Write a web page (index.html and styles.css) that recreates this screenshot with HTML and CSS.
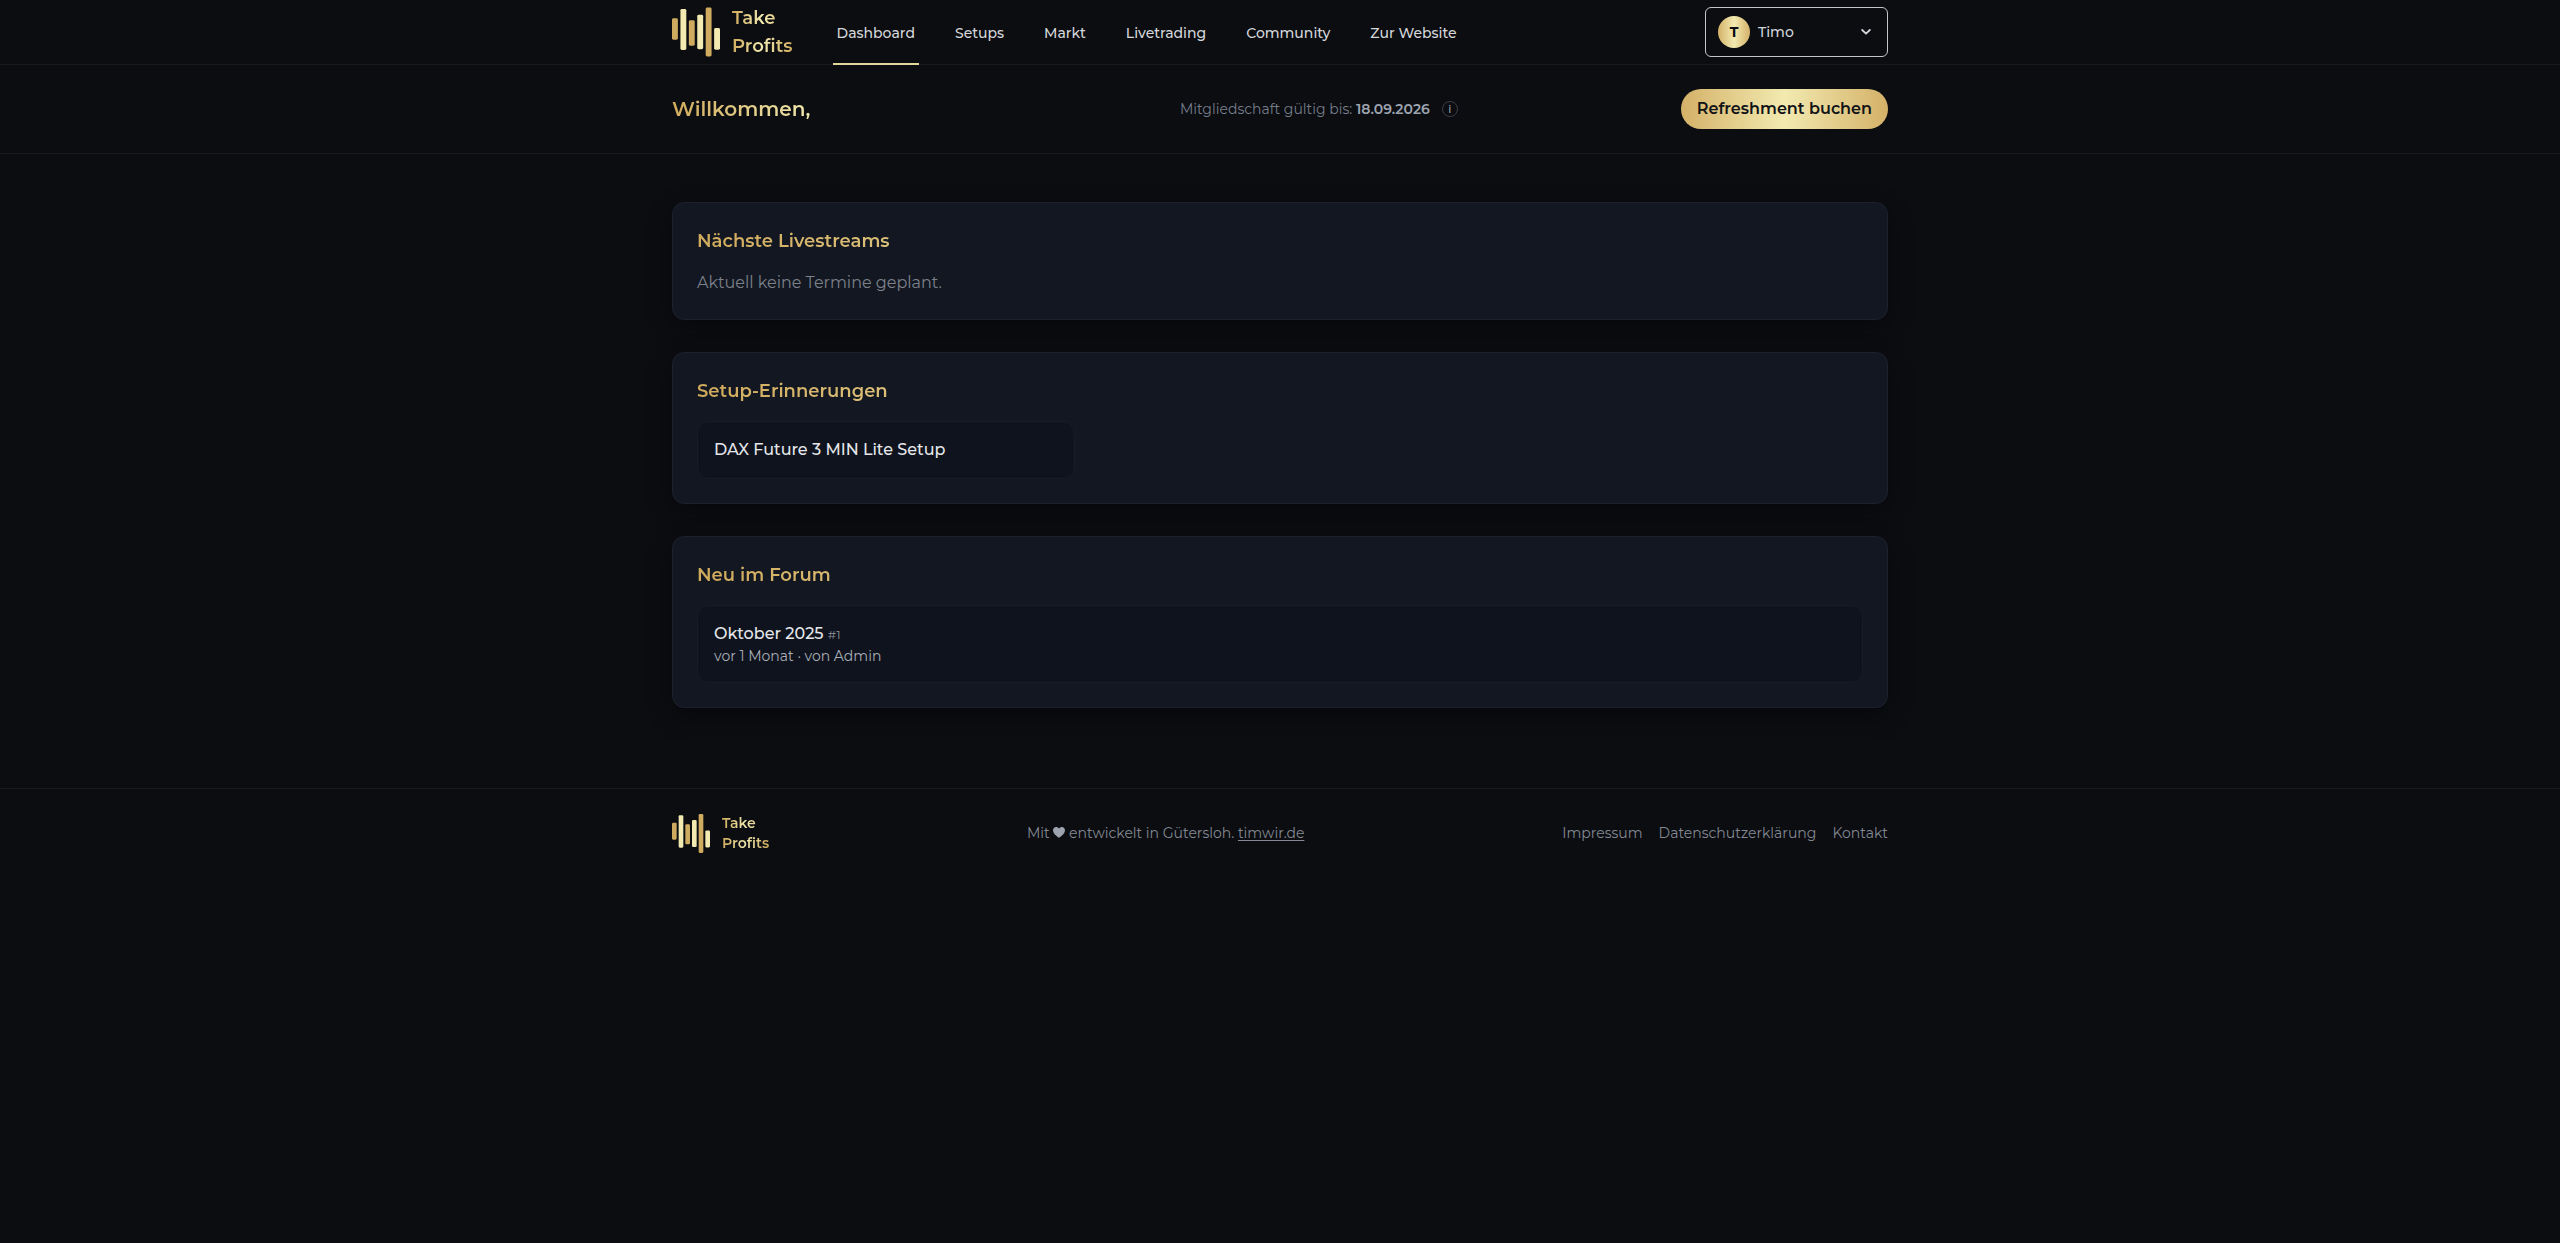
FILE: index.html
```html
<!DOCTYPE html>
<html lang="de">
<head>
  <meta charset="UTF-8">
  <meta name="viewport" content="width=device-width, initial-scale=1.0">
  <title>Dashboard - Take Profits</title>
  <link rel="stylesheet" href="styles.css">
</head>
<body>
  <svg class="sprite" aria-hidden="true">
    <symbol id="logo" viewBox="0 0 49 50">
      <g fill="#cfab60">
        <rect x="0" y="11" width="6" height="22" rx="1.5"/>
        <rect x="17.2" y="13" width="6" height="26" rx="1.5"/>
        <rect x="34.4" y="0" width="6" height="50" rx="1.5"/>
      </g>
      <g fill="#f2eab0">
        <rect x="8.6" y="1.4" width="6" height="42" rx="1.5"/>
        <rect x="25.8" y="7.5" width="6" height="35" rx="1.5"/>
        <rect x="43" y="21" width="6" height="22" rx="1.5"/>
      </g>
    </symbol>
  </svg>

  <header class="topbar">
    <div class="container topbar-inner">
      <a class="brand" href="#">
        <svg class="brand-mark"><use href="#logo"/></svg>
        <span class="brand-name gold-text">Take<br>Profits</span>
      </a>
      <nav class="nav">
        <a class="active" href="#">Dashboard</a>
        <a href="#">Setups</a>
        <a href="#">Markt</a>
        <a href="#">Livetrading</a>
        <a href="#">Community</a>
        <a href="#">Zur Website</a>
      </nav>
      <button class="user-menu" type="button">
        <span class="avatar">T</span>
        <span class="user-name">Timo</span>
        <svg class="chevron" viewBox="0 0 10 6"><path d="M1.2 1l3.8 3.7L8.800 1" fill="none" stroke="currentColor" stroke-width="1.8" stroke-linecap="round" stroke-linejoin="round"/></svg>
      </button>
    </div>
  </header>

  <section class="welcome">
    <div class="container welcome-inner">
      <h1 class="gold-text">Willkommen,</h1>
      <div class="membership">
        <span>Mitgliedschaft gültig bis: <strong>18.09.2026</strong></span>
        <button class="info" type="button" aria-label="Info">i</button>
      </div>
      <a class="btn-gold" href="#">Refreshment buchen</a>
    </div>
  </section>

  <main class="container content">
    <section class="card">
      <h2 class="gold-text">Nächste Livestreams</h2>
      <p class="empty">Aktuell keine Termine geplant.</p>
    </section>

    <section class="card">
      <h2 class="gold-text">Setup-Erinnerungen</h2>
      <div class="setup-grid">
        <a class="item" href="#">DAX Future 3 MIN Lite Setup</a>
      </div>
    </section>

    <section class="card">
      <h2 class="gold-text">Neu im Forum</h2>
      <a class="item" href="#">
        <div>Oktober 2025 <span class="post-number">#1</span></div>
        <div class="post-meta">vor 1 Monat · von Admin</div>
      </a>
    </section>
  </main>

  <footer class="footer">
    <div class="container footer-inner">
      <a class="brand brand-small" href="#">
        <svg class="brand-mark"><use href="#logo"/></svg>
        <span class="brand-name gold-text">Take<br>Profits</span>
      </a>
      <p class="credits">Mit <svg class="heart" viewBox="0 0 12 11"><path d="M6 11C4.500 9.600 0 6.900 0 3.300 0 1.300 1.400 0 3.100 0 4.300 0 5.400.6 6 1.600 6.600.6 7.700 0 8.900 0 10.600 0 12 1.300 12 3.300 12 6.900 7.500 9.600 6 11z" fill="#9ca3af"/></svg> entwickelt in Gütersloh. <a href="#">timwir.de</a></p>
      <nav class="footer-links">
        <a href="#">Impressum</a>
        <a href="#">Datenschutzerklärung</a>
        <a href="#">Kontakt</a>
      </nav>
    </div>
  </footer>
</body>
</html>
```
FILE: styles.css
```css
* {
  box-sizing: border-box;
}
body {
  margin: 0;
  min-height: 100vh;
  background: #0b0d11;
  color: #e5e7eb;
  font-family: Montserrat, Inter, sans-serif;
  font-size: 16px;
  line-height: 24px;
}
h1, h2, p {
  margin: 0;
}
a {
  color: inherit;
  text-decoration: none;
}
button {
  background: none;
  color: inherit;
  font-family: inherit;
  cursor: pointer;
}
.sprite {
  display: none;
}
.container {
  max-width: 1280px;
  margin: 0 auto;
  padding: 0 32px;
}
.gold-text {
  background: linear-gradient(90deg, #d0aa5c, #f2eab0, #d0aa5c);
  -webkit-background-clip: text;
  background-clip: text;
  color: transparent;
}

/* Header */
.topbar {
  border-bottom: 1px solid #16191e;
}
.topbar-inner {
  display: flex;
  align-items: center;
  height: 64px;
}
.brand {
  display: flex;
  align-items: center;
  gap: 12px;
}
.brand-mark {
  width: 48px;
  height: 50px;
}
.brand-name {
  font-size: 18px;
  font-weight: 600;
  line-height: 28px;
}
.nav {
  display: flex;
  align-self: stretch;
  gap: 32px;
  margin-left: 40px;
  margin-bottom: -1px;
  font-size: 14px;
  font-weight: 500;
}
.nav a {
  display: flex;
  align-items: center;
  padding: 2px 4px 0;
  border-bottom: 2px solid transparent;
  color: #d5d7db;
}
.nav a.active {
  border-bottom-color: #e0d59b;
}
.user-menu {
  display: flex;
  align-items: center;
  gap: 8px;
  width: 183px;
  height: 50px;
  margin-left: auto;
  padding: 0 16px 0 12px;
  border: 1px solid #c4c6ca;
  border-radius: 6px;
  color: #d1d5db;
  font-size: 14px;
  font-weight: 500;
}
.avatar {
  display: flex;
  align-items: center;
  justify-content: center;
  width: 32px;
  height: 32px;
  border-radius: 50%;
  background: linear-gradient(90deg, #d4b168, #f2eab0, #d4b168);
  color: #0b0d11;
  font-size: 14px;
  font-weight: 700;
}
.chevron {
  width: 10px;
  height: 6px;
  margin-left: auto;
}

/* Welcome bar */
.welcome {
  border-bottom: 1px solid #16191e;
}
.welcome-inner {
  display: flex;
  align-items: center;
  justify-content: space-between;
  padding-top: 24px;
  padding-bottom: 24px;
}
.welcome h1 {
  min-width: 285px;
  font-size: 20px;
  font-weight: 600;
  line-height: 28px;
}
.membership {
  display: flex;
  align-items: center;
  gap: 12px;
  color: #777e8b;
  font-size: 14px;
}
.membership strong {
  color: #9ca3af;
  font-weight: 600;
}
.info {
  width: 16px;
  height: 16px;
  padding: 0;
  border: 1px solid #3a3d43;
  border-radius: 50%;
  color: #9ca3af;
  font-size: 11px;
  font-weight: 500;
  line-height: 14px;
}
.btn-gold {
  padding: 8px 16px;
  border-radius: 20px;
  background: linear-gradient(90deg, #d4b168, #f2eab0, #d4b168);
  color: #111317;
  font-weight: 600;
}

/* Cards */
.content {
  display: flex;
  flex-direction: column;
  gap: 32px;
  padding-top: 48px;
  padding-bottom: 48px;
}
.card {
  padding: 24px;
  border: 1px solid #1b202b;
  border-radius: 12px;
  background: #121721;
  box-shadow: 0 8px 24px rgba(0, 0, 0, 0.4);
}
.card h2 {
  margin-bottom: 16px;
  font-size: 18px;
  font-weight: 600;
  line-height: 28px;
}
.empty {
  color: #7d818b;
}
.setup-grid {
  display: grid;
  grid-template-columns: repeat(3, 1fr);
  gap: 16px;
}
.item {
  display: block;
  padding: 16px;
  border: 1px solid #181c26;
  border-radius: 12px;
  background: #0f131d;
  font-weight: 500;
}
.post-number {
  color: #9297a1;
  font-size: 12px;
  font-weight: 400;
  line-height: 16px;
}
.post-meta {
  color: #a9aeb8;
  font-size: 14px;
  font-weight: 400;
  line-height: 20px;
}

/* Footer */
.footer {
  margin-top: 32px;
  border-top: 1px solid #16191e;
  color: #848993;
  font-size: 14px;
}
.footer-inner {
  display: flex;
  align-items: center;
  justify-content: space-between;
  padding-top: 24px;
  padding-bottom: 24px;
}
.brand-small .brand-mark {
  width: 38px;
  height: 39px;
}
.brand-small .brand-name {
  font-size: 14px;
  line-height: 20px;
}
.heart {
  width: 12px;
  height: 11px;
}
.credits a {
  text-decoration: underline;
  text-underline-offset: 2px;
}
.footer-links {
  display: flex;
  gap: 16px;
}
```
